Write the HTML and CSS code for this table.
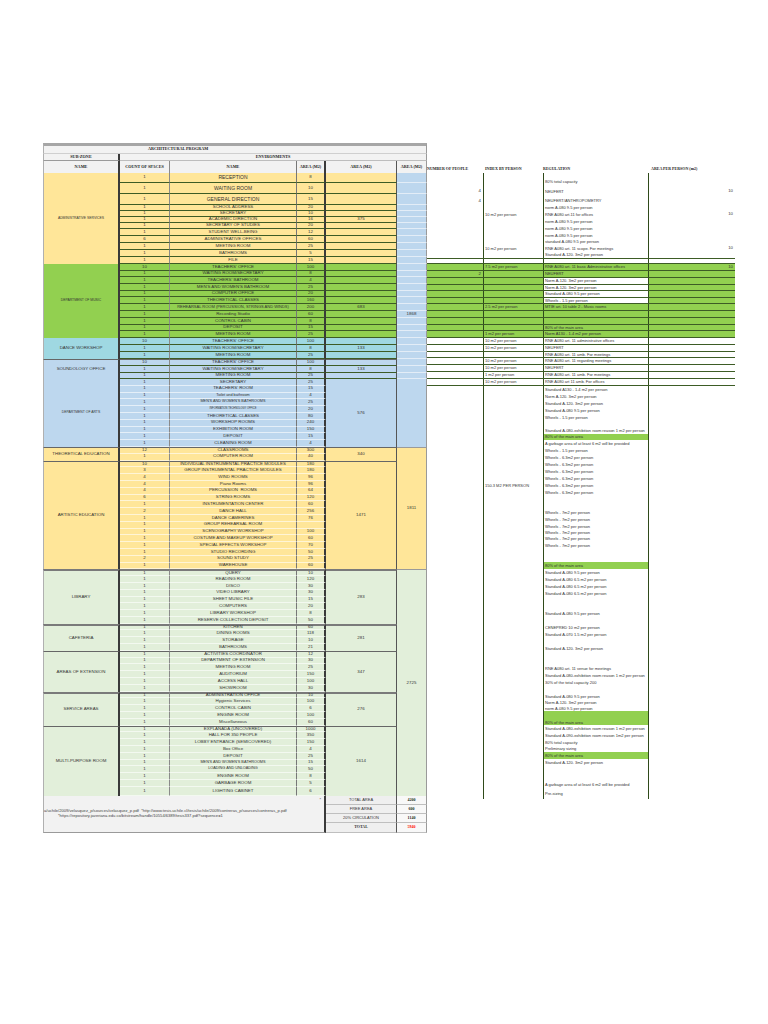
FILE: index.html
```html
<!DOCTYPE html>
<html lang="en">
<head>
<meta charset="utf-8">
<title>Architectural Program</title>
<link rel="stylesheet" href="styles.css">
</head>
<body>
<div class="page">
  <div class="sheet">
    <div class="hdr">
      <div class="h-title">ARCHITECTURAL PROGRAM</div>
      <div class="h-sub">SUB-ZONE</div>
      <div class="h-env">ENVIRONMENTS</div>
      <div class="h-col zone">NAME</div>
      <div class="h-col cnt">COUNT OF SPACES</div>
      <div class="h-col nm">NAME</div>
      <div class="h-col ar">AREA (M2)</div>
      <div class="h-col tot">AREA (M2)</div>
      <div class="h-col grand">AREA (M2)</div>
    </div>

    <div class="grid">
      <div class="sec lined adm">
        <div class="zone sp12 f34">ADMINISTRATIVE SERVICES</div>
        <div class="cnt">1</div><div class="nm f5">RECEPTION</div><div class="ar">8</div><div class="tot"></div><div class="grand"></div>
        <div class="cnt">1</div><div class="nm f5">WAITING ROOM</div><div class="ar">10</div><div class="tot"></div><div class="grand"></div>
        <div class="cnt">1</div><div class="nm f5">GENERAL DIRECTION</div><div class="ar">15</div><div class="tot"></div><div class="grand"></div>
        <div class="cnt">1</div><div class="nm">SCHOOL ADDRESS</div><div class="ar">20</div><div class="tot"></div><div class="grand"></div>
        <div class="cnt">1</div><div class="nm">SECRETARY</div><div class="ar">10</div><div class="tot"></div><div class="grand"></div>
        <div class="cnt">1</div><div class="nm">ACADEMIC DIRECTION</div><div class="ar">16</div><div class="tot">375</div><div class="grand"></div>
        <div class="cnt">1</div><div class="nm">SECRETARY OF STUDIES</div><div class="ar">20</div><div class="tot"></div><div class="grand"></div>
        <div class="cnt">1</div><div class="nm">STUDENT WELL-BEING</div><div class="ar">12</div><div class="tot"></div><div class="grand"></div>
        <div class="cnt">6</div><div class="nm">ADMINISTRATIVE OFFICES</div><div class="ar">60</div><div class="tot"></div><div class="grand"></div>
        <div class="cnt">1</div><div class="nm">MEETING ROOM</div><div class="ar">25</div><div class="tot"></div><div class="grand"></div>
        <div class="cnt">1</div><div class="nm">BATHROOMS</div><div class="ar">5</div><div class="tot"></div><div class="grand"></div>
        <div class="cnt">1</div><div class="nm">FILE</div><div class="ar">15</div><div class="tot"></div><div class="grand"></div>
      </div>

      <div class="sec lined mus">
        <div class="zone sp11 f34">DEPARTMENT OF MUSIC</div>
        <div class="cnt">10</div><div class="nm">TEACHERS' OFFICE</div><div class="ar">100</div><div class="tot"></div><div class="grand"></div>
        <div class="cnt">1</div><div class="nm">WAITING ROOM/SECRETARY</div><div class="ar">8</div><div class="tot"></div><div class="grand"></div>
        <div class="cnt">1</div><div class="nm">TEACHERS' BATHROOM</div><div class="ar">4</div><div class="tot"></div><div class="grand"></div>
        <div class="cnt">1</div><div class="nm">MEN'S AND WOMEN'S BATHROOM</div><div class="ar">25</div><div class="tot"></div><div class="grand"></div>
        <div class="cnt">1</div><div class="nm">COMPUTER OFFICE</div><div class="ar">20</div><div class="tot"></div><div class="grand"></div>
        <div class="cnt">1</div><div class="nm">THEORETICAL CLASSES</div><div class="ar">160</div><div class="tot"></div><div class="grand"></div>
        <div class="cnt">1</div><div class="nm f4">REHEARSAL ROOM (PERCUSSION, STRINGS AND WINDS)</div><div class="ar">200</div><div class="tot">683</div><div class="grand"></div>
        <div class="cnt">1</div><div class="nm">Recording Studio</div><div class="ar">60</div><div class="tot"></div><div class="grand">1868</div>
        <div class="cnt">1</div><div class="nm">CONTROL CABIN</div><div class="ar">8</div><div class="tot"></div><div class="grand"></div>
        <div class="cnt">1</div><div class="nm">DEPOSIT</div><div class="ar">15</div><div class="tot"></div><div class="grand"></div>
        <div class="cnt">1</div><div class="nm">MEETING ROOM</div><div class="ar">25</div><div class="tot"></div><div class="grand"></div>
      </div>

      <div class="sec lined dan">
        <div class="zone sp3">DANCE WORKSHOP</div>
        <div class="cnt">10</div><div class="nm">TEACHERS' OFFICE</div><div class="ar">100</div><div class="tot"></div><div class="grand"></div>
        <div class="cnt">1</div><div class="nm">WAITING ROOM/SECRETARY</div><div class="ar">8</div><div class="tot">133</div><div class="grand"></div>
        <div class="cnt">1</div><div class="nm">MEETING ROOM</div><div class="ar">25</div><div class="tot"></div><div class="grand"></div>
      </div>

      <div class="sec lined snd sep">
        <div class="zone sp3">SOUNDOLOGY OFFICE</div>
        <div class="cnt">10</div><div class="nm">TEACHERS' OFFICE</div><div class="ar">100</div><div class="tot"></div><div class="grand"></div>
        <div class="cnt">1</div><div class="nm">WAITING ROOM/SECRETARY</div><div class="ar">8</div><div class="tot">133</div><div class="grand"></div>
        <div class="cnt">1</div><div class="nm">MEETING ROOM</div><div class="ar">25</div><div class="tot"></div><div class="grand"></div>
      </div>

      <div class="sec lite art">
        <div class="zone sp10 f34">DEPARTMENT OF ARTS</div>
        <div class="cnt">1</div><div class="nm">SECRETARY</div><div class="ar">25</div><div class="tot sp10">576</div><div class="grand sp10"></div>
        <div class="cnt">1</div><div class="nm">TEACHERS' ROOM</div><div class="ar">15</div>
        <div class="cnt">1</div><div class="nm f38">Toilet and bathroom</div><div class="ar">4</div>
        <div class="cnt">1</div><div class="nm f38">MEN'S AND WOMEN'S BATHROOMS</div><div class="ar">25</div>
        <div class="cnt">1</div><div class="nm f26">INFORMATION TECHNOLOGY OFFICE</div><div class="ar">20</div>
        <div class="cnt">1</div><div class="nm">THEORETICAL CLASSES</div><div class="ar">80</div>
        <div class="cnt">1</div><div class="nm">WORKSHOP ROOMS</div><div class="ar">240</div>
        <div class="cnt">1</div><div class="nm">EXHIBITION ROOM</div><div class="ar">150</div>
        <div class="cnt">1</div><div class="nm">DEPOSIT</div><div class="ar">15</div>
        <div class="cnt">1</div><div class="nm">CLEANING ROOM</div><div class="ar">4</div>
      </div>

      <div class="sec lite yel sep">
        <div class="zone sp2">THEORETICAL EDUCATION</div>
        <div class="cnt">12</div><div class="nm">CLASSROOMS</div><div class="ar">300</div><div class="tot sp2">340</div><div class="grand sp18 gtop">1811</div>
        <div class="cnt">1</div><div class="nm">COMPUTER ROOM</div><div class="ar">40</div>
      </div>

      <div class="sec lite yel sep">
        <div class="zone sp16">ARTISTIC EDUCATION</div>
        <div class="cnt">10</div><div class="nm">INDIVIDUAL INSTRUMENTAL PRACTICE MODULES</div><div class="ar">180</div><div class="tot sp16">1471</div>
        <div class="cnt">3</div><div class="nm">GROUP INSTRUMENTAL PRACTICE MODULES</div><div class="ar">180</div>
        <div class="cnt">4</div><div class="nm">WIND ROOMS</div><div class="ar">96</div>
        <div class="cnt">4</div><div class="nm">Piano Rooms</div><div class="ar">96</div>
        <div class="cnt">4</div><div class="nm">PERCUSSION &nbsp;ROOMS</div><div class="ar">64</div>
        <div class="cnt">6</div><div class="nm">STRING ROOMS</div><div class="ar">120</div>
        <div class="cnt">1</div><div class="nm">INSTRUMENTATION CENTER</div><div class="ar">60</div>
        <div class="cnt">2</div><div class="nm">DANCE HALL</div><div class="ar">256</div>
        <div class="cnt">1</div><div class="nm">DANCE CAMERINES</div><div class="ar">76</div>
        <div class="cnt">1</div><div class="nm">GROUP REHEARSAL ROOM</div><div class="ar"></div>
        <div class="cnt">1</div><div class="nm">SCENOGRAPHY WORKSHOP</div><div class="ar">100</div>
        <div class="cnt">1</div><div class="nm">COSTUME AND MAKEUP WORKSHOP</div><div class="ar">60</div>
        <div class="cnt">1</div><div class="nm">SPECIAL EFFECTS WORKSHOP</div><div class="ar">70</div>
        <div class="cnt">1</div><div class="nm">STUDIO RECORDING</div><div class="ar">50</div>
        <div class="cnt">2</div><div class="nm">SOUND STUDY</div><div class="ar">25</div>
        <div class="cnt">1</div><div class="nm">WAREHOUSE</div><div class="ar">60</div>
      </div>

      <div class="sec lite lgr sep2">
        <div class="zone sp8">LIBRARY</div>
        <div class="cnt">1</div><div class="nm">QUERY</div><div class="ar">10</div><div class="tot sp8">283</div><div class="grand sp33 gtop">2725</div>
        <div class="cnt">1</div><div class="nm">READING ROOM</div><div class="ar">120</div>
        <div class="cnt">1</div><div class="nm">DISCO</div><div class="ar">30</div>
        <div class="cnt">1</div><div class="nm">VIDEO LIBRARY</div><div class="ar">30</div>
        <div class="cnt">1</div><div class="nm">SHEET MUSIC FILE</div><div class="ar">15</div>
        <div class="cnt">1</div><div class="nm">COMPUTERS</div><div class="ar">20</div>
        <div class="cnt">1</div><div class="nm">LIBRARY WORKSHOP</div><div class="ar">8</div>
        <div class="cnt">1</div><div class="nm">RESERVE COLLECTION DEPOSIT</div><div class="ar">50</div>
      </div>

      <div class="sec lite lgr sep2">
        <div class="zone sp4">CAFETERIA</div>
        <div class="cnt">1</div><div class="nm">KITCHEN</div><div class="ar">60</div><div class="tot sp4">281</div>
        <div class="cnt">1</div><div class="nm">DINING ROOMS</div><div class="ar">118</div>
        <div class="cnt">1</div><div class="nm">STORAGE</div><div class="ar">10</div>
        <div class="cnt">1</div><div class="nm">BATHROOMS</div><div class="ar">21</div>
      </div>

      <div class="sec lite lgr sep">
        <div class="zone sp6">AREAS OF EXTENSION</div>
        <div class="cnt">1</div><div class="nm">ACTIVITIES COORDINATOR</div><div class="ar">12</div><div class="tot sp6">347</div>
        <div class="cnt">1</div><div class="nm">DEPARTMENT OF EXTENSION</div><div class="ar">30</div>
        <div class="cnt">1</div><div class="nm">MEETING ROOM</div><div class="ar">25</div>
        <div class="cnt">1</div><div class="nm">AUDITORIUM</div><div class="ar">150</div>
        <div class="cnt">1</div><div class="nm">ACCESS HALL</div><div class="ar">100</div>
        <div class="cnt">1</div><div class="nm">SHOWROOM</div><div class="ar">30</div>
      </div>

      <div class="sec lite lgr sep2">
        <div class="zone sp5">SERVICE AREAS</div>
        <div class="cnt">1</div><div class="nm">ADMINISTRATION OFFICE</div><div class="ar">10</div><div class="tot sp5">276</div>
        <div class="cnt">1</div><div class="nm">Hygienic Services</div><div class="ar">100</div>
        <div class="cnt">1</div><div class="nm">CONTROL CABIN</div><div class="ar">6</div>
        <div class="cnt">1</div><div class="nm">ENGINE ROOM</div><div class="ar">100</div>
        <div class="cnt">1</div><div class="nm">Miscellaneous</div><div class="ar">60</div>
      </div>

      <div class="sec lite lgr sep">
        <div class="zone sp10">MULTI-PURPOSE ROOM</div>
        <div class="cnt">1</div><div class="nm">EXPLANADA (UNCOVERED)</div><div class="ar">1000</div><div class="tot sp10">1614</div>
        <div class="cnt">1</div><div class="nm">HALL FOR 350 PEOPLE</div><div class="ar">350</div>
        <div class="cnt">1</div><div class="nm">LOBBY ENTRANCE (SEMICOVERED)</div><div class="ar">150</div>
        <div class="cnt">1</div><div class="nm">Box Office</div><div class="ar">4</div>
        <div class="cnt">1</div><div class="nm">DEPOSIT</div><div class="ar">25</div>
        <div class="cnt">1</div><div class="nm f38">MEN'S AND WOMEN'S BATHROOMS</div><div class="ar">15</div>
        <div class="cnt">1</div><div class="nm f38">LOADING AND UNLOADING</div><div class="ar">50</div>
        <div class="cnt">1</div><div class="nm">ENGINE ROOM</div><div class="ar">8</div>
        <div class="cnt">1</div><div class="nm">GARBAGE ROOM</div><div class="ar">5</div>
        <div class="cnt">1</div><div class="nm">LIGHTING CABINET</div><div class="ar">6</div>
      </div>

      <div class="sec foot">
        <div class="note">
          <span class="star">*</span>
          <div class="nl nl1">a/uchile/2009/velasquez_p/sources/velasquez_p.pdf &nbsp;*http://www.tesis.uchile.cl/tesis/uchile/2009/contreras_p/sources/contreras_p.pdf</div>
          <div class="nl nl2">*https://repository.javeriana.edu.co/bitstream/handle/10554/6389/tesis337.pdf?sequence=1</div>
        </div>
        <div class="tot lab">TOTAL AREA</div><div class="grand val">4200</div>
        <div class="tot lab">FREE AREA</div><div class="grand val">600</div>
        <div class="tot lab">20% CIRCULATION</div><div class="grand val">1140</div>
        <div class="tot lab srf">TOTAL</div><div class="grand val red">5940</div>
      </div>
    </div>
  </div>

  <div class="side">
    <div class="side-hdr">
      <div>NUMBER OF PEOPLE</div>
      <div class="pl">INDEX BY PERSON</div>
      <div>REGULATION</div>
      <div class="pl">AREA PER PERSON (m2)</div>
    </div>
    <div class="rows">
      <div class="rw h5"><div class="np"></div><div class="ix"></div><div class="rg"></div><div class="ap"></div></div>
      <div class="rw h8"><div class="np"></div><div class="ix"></div><div class="rg">80% total capacity</div><div class="ap"></div></div>
      <div class="rw h11"><div class="np">4</div><div class="ix"></div><div class="rg">NEUFERT</div><div class="ap">10</div></div>
      <div class="rw h8"><div class="np">4</div><div class="ix"></div><div class="rg">NEUFERT/ANTHROPOMETRY</div><div class="ap"></div></div>
      <div class="rw h6"><div class="np"></div><div class="ix"></div><div class="rg">norm A-080 9.5 per person</div><div class="ap"></div></div>
      <div class="rw h7"><div class="np"></div><div class="ix">10 m2 per person</div><div class="rg">RNE A080 art.11 for offices</div><div class="ap">10</div></div>
      <div class="rw h7"><div class="np"></div><div class="ix"></div><div class="rg">norm A-080 9.5 per person</div><div class="ap"></div></div>
      <div class="rw h7"><div class="np"></div><div class="ix"></div><div class="rg">norm A-080 9.5 per person</div><div class="ap"></div></div>
      <div class="rw h7"><div class="np"></div><div class="ix"></div><div class="rg">norm A-080 9.5 per person</div><div class="ap"></div></div>
      <div class="rw h6"><div class="np"></div><div class="ix"></div><div class="rg">standard A-080 9.5 per person</div><div class="ap"></div></div>
      <div class="rw h7"><div class="np"></div><div class="ix">10 m2 per person</div><div class="rg">RNE A080 art. 11 scope. For meetings</div><div class="ap">10</div></div>
      <div class="rw h7 bl"><div class="np"></div><div class="ix"></div><div class="rg">Standard A-120. 3m2 per person</div><div class="ap"></div></div>
      <div class="rw h5 bl"><div class="np"></div><div class="ix"></div><div class="rg"></div><div class="ap"></div></div>

      <div class="rw h7 gn bl"><div class="np"></div><div class="ix">7.5 m2 per person</div><div class="rg">RNE A080 art. 11 basic Administrative offices</div><div class="ap">10</div></div>
      <div class="rw h7 gn bl"><div class="np">2</div><div class="ix"></div><div class="rg">NEUFERT</div><div class="ap"></div></div>
      <div class="rw h7 gn bl"><div class="np"></div><div class="ix"></div><div class="rg wh">Norm A-120. 3m2 per person</div><div class="ap"></div></div>
      <div class="rw h6 gn bl"><div class="np"></div><div class="ix"></div><div class="rg wh">Norm A-120. 3m2 per person</div><div class="ap"></div></div>
      <div class="rw h7 gn bl"><div class="np"></div><div class="ix"></div><div class="rg wh">Standard A-080 9.5 per person</div><div class="ap"></div></div>
      <div class="rw h6 gn bl"><div class="np"></div><div class="ix"></div><div class="rg wh">Wheels - 1.5 per person</div><div class="ap"></div></div>
      <div class="rw h7 gn bl"><div class="np"></div><div class="ix">2.5 m2 per person</div><div class="rg">MTIE art. 10 table 2 - Music rooms</div><div class="ap"></div></div>
      <div class="rw h7 gn bl"><div class="np"></div><div class="ix"></div><div class="rg"></div><div class="ap"></div></div>
      <div class="rw h7 gn bl"><div class="np"></div><div class="ix"></div><div class="rg"></div><div class="ap"></div></div>
      <div class="rw h6 gn bl"><div class="np"></div><div class="ix"></div><div class="rg">80% of the main area</div><div class="ap"></div></div>
      <div class="rw h7 gn bl"><div class="np"></div><div class="ix">1 m2 per person</div><div class="rg">Norm A130 - 1.4 m2 per person</div><div class="ap"></div></div>

      <div class="rw h7 bl"><div class="np"></div><div class="ix">10 m2 per person</div><div class="rg">RNE A080 art. 11 administrative offices</div><div class="ap"></div></div>
      <div class="rw h7 bl"><div class="np"></div><div class="ix">10 m2 per person</div><div class="rg">NEUFERT</div><div class="ap"></div></div>
      <div class="rw h6 bl"><div class="np"></div><div class="ix"></div><div class="rg">RNE A080 art. 11 amb. For meetings</div><div class="ap"></div></div>
      <div class="rw h7 bl"><div class="np"></div><div class="ix">10 m2 per person</div><div class="rg">RNE A080 art. 11 regarding meetings</div><div class="ap"></div></div>
      <div class="rw h7 bl"><div class="np"></div><div class="ix">10 m2 per person</div><div class="rg">NEUFERT</div><div class="ap"></div></div>
      <div class="rw h7 bl"><div class="np"></div><div class="ix">1 m2 per person</div><div class="rg">RNE A080 art. 11 amb. For meetings</div><div class="ap"></div></div>
      <div class="rw h7 bl"><div class="np"></div><div class="ix">10 m2 per person</div><div class="rg">RNE A080 art 11 amb. For offices</div><div class="ap"></div></div>

      <div class="rw h7"><div class="np"></div><div class="ix"></div><div class="rg">Standard A130 - 1.4 m2 per person</div><div class="ap"></div></div>
      <div class="rw h7"><div class="np"></div><div class="ix"></div><div class="rg">Norm A-120. 3m2 per person</div><div class="ap"></div></div>
      <div class="rw h7"><div class="np"></div><div class="ix"></div><div class="rg">Standard A-120. 3m2 per person</div><div class="ap"></div></div>
      <div class="rw h7"><div class="np"></div><div class="ix"></div><div class="rg">Standard A-080 9.5 per person</div><div class="ap"></div></div>
      <div class="rw h7"><div class="np"></div><div class="ix"></div><div class="rg">Wheels - 1.5 per person</div><div class="ap"></div></div>
      <div class="rw h7"><div class="np"></div><div class="ix"></div><div class="rg"></div><div class="ap"></div></div>
      <div class="rw h6"><div class="np"></div><div class="ix"></div><div class="rg">Standard A-080-exhibition room reason 1 m2 per person</div><div class="ap"></div></div>
      <div class="rw h6"><div class="np"></div><div class="ix"></div><div class="rg hl">80% of the main area</div><div class="ap"></div></div>
      <div class="rw h7"><div class="np"></div><div class="ix"></div><div class="rg">A garbage area of at least 6 m2 will be provided</div><div class="ap"></div></div>
      <div class="rw h7"><div class="np"></div><div class="ix"></div><div class="rg">Wheels - 1.5 per person</div><div class="ap"></div></div>
      <div class="rw h7"><div class="np"></div><div class="ix"></div><div class="rg">Wheels - 6.3m2 per person</div><div class="ap"></div></div>
      <div class="rw h7"><div class="np"></div><div class="ix"></div><div class="rg">Wheels - 6.3m2 per person</div><div class="ap"></div></div>
      <div class="rw h7"><div class="np"></div><div class="ix"></div><div class="rg">Wheels - 6.3m2 per person</div><div class="ap"></div></div>
      <div class="rw h7"><div class="np"></div><div class="ix"></div><div class="rg">Wheels - 6.3m2 per person</div><div class="ap"></div></div>
      <div class="rw h7"><div class="np"></div><div class="ix">150.3 M2 PER PERSON</div><div class="rg">Wheels - 6.3m2 per person</div><div class="ap"></div></div>
      <div class="rw h7"><div class="np"></div><div class="ix"></div><div class="rg">Wheels - 6.3m2 per person</div><div class="ap"></div></div>
      <div class="rw h13"><div class="np"></div><div class="ix"></div><div class="rg"></div><div class="ap"></div></div>
      <div class="rw h7"><div class="np"></div><div class="ix"></div><div class="rg">Wheels - 7m2 per person</div><div class="ap"></div></div>
      <div class="rw h7"><div class="np"></div><div class="ix"></div><div class="rg">Wheels - 7m2 per person</div><div class="ap"></div></div>
      <div class="rw h7"><div class="np"></div><div class="ix"></div><div class="rg">Wheels - 7m2 per person</div><div class="ap"></div></div>
      <div class="rw h6"><div class="np"></div><div class="ix"></div><div class="rg">Wheels - 7m2 per person</div><div class="ap"></div></div>
      <div class="rw h6"><div class="np"></div><div class="ix"></div><div class="rg">Wheels - 7m2 per person</div><div class="ap"></div></div>
      <div class="rw h7"><div class="np"></div><div class="ix"></div><div class="rg">Wheels - 7m2 per person</div><div class="ap"></div></div>
      <div class="rw h13"><div class="np"></div><div class="ix"></div><div class="rg"></div><div class="ap"></div></div>
      <div class="rw h7"><div class="np"></div><div class="ix"></div><div class="rg hl">80% of the main area</div><div class="ap"></div></div>
      <div class="rw h7"><div class="np"></div><div class="ix"></div><div class="rg">Standard A-080 9.5 per person</div><div class="ap"></div></div>
      <div class="rw h7"><div class="np"></div><div class="ix"></div><div class="rg">Standard A-080 6.5 m2 per person</div><div class="ap"></div></div>
      <div class="rw h7"><div class="np"></div><div class="ix"></div><div class="rg">Standard A-080 6.5 m2 per person</div><div class="ap"></div></div>
      <div class="rw h7"><div class="np"></div><div class="ix"></div><div class="rg">Standard A-080 6.5 m2 per person</div><div class="ap"></div></div>
      <div class="rw h13"><div class="np"></div><div class="ix"></div><div class="rg"></div><div class="ap"></div></div>
      <div class="rw h7"><div class="np"></div><div class="ix"></div><div class="rg">Standard A-080 9.5 per person</div><div class="ap"></div></div>
      <div class="rw h7"><div class="np"></div><div class="ix"></div><div class="rg"></div><div class="ap"></div></div>
      <div class="rw h7"><div class="np"></div><div class="ix"></div><div class="rg">CENEPRED 10 m2 per person</div><div class="ap"></div></div>
      <div class="rw h7"><div class="np"></div><div class="ix"></div><div class="rg">Standard A-070 1.5 m2 per person</div><div class="ap"></div></div>
      <div class="rw h7"><div class="np"></div><div class="ix"></div><div class="rg"></div><div class="ap"></div></div>
      <div class="rw h7"><div class="np"></div><div class="ix"></div><div class="rg">Standard A-120. 3m2 per person</div><div class="ap"></div></div>
      <div class="rw h13"><div class="np"></div><div class="ix"></div><div class="rg"></div><div class="ap"></div></div>
      <div class="rw h7"><div class="np"></div><div class="ix"></div><div class="rg">RNE A080 art. 11 venue for meetings</div><div class="ap"></div></div>
      <div class="rw h7"><div class="np"></div><div class="ix"></div><div class="rg">Standard A-080-exhibition room reason 1 m2 per person</div><div class="ap"></div></div>
      <div class="rw h7"><div class="np"></div><div class="ix"></div><div class="rg">30% of the total capacity 200</div><div class="ap"></div></div>
      <div class="rw h7"><div class="np"></div><div class="ix"></div><div class="rg"></div><div class="ap"></div></div>
      <div class="rw h7"><div class="np"></div><div class="ix"></div><div class="rg">Standard A-080 9.5 per person</div><div class="ap"></div></div>
      <div class="rw h6"><div class="np"></div><div class="ix"></div><div class="rg">Norm A-120. 3m2 per person</div><div class="ap"></div></div>
      <div class="rw h5"><div class="np"></div><div class="ix"></div><div class="rg">norm A-080 9.5 per person</div><div class="ap"></div></div>
      <div class="rw h14"><div class="np"></div><div class="ix"></div><div class="rg hl bot">80% of the main area</div><div class="ap"></div></div>
      <div class="rw h7"><div class="np"></div><div class="ix"></div><div class="rg">Standard A-080-exhibition room reason 1 m2 per person</div><div class="ap"></div></div>
      <div class="rw h7"><div class="np"></div><div class="ix"></div><div class="rg">Standard A-090-exhibition room reason 1m2 per person</div><div class="ap"></div></div>
      <div class="rw h7"><div class="np"></div><div class="ix"></div><div class="rg">80% total capacity</div><div class="ap"></div></div>
      <div class="rw h6"><div class="np"></div><div class="ix"></div><div class="rg">Preliminary sizing</div><div class="ap"></div></div>
      <div class="rw h7"><div class="np"></div><div class="ix"></div><div class="rg hl">80% of the main area</div><div class="ap"></div></div>
      <div class="rw h8"><div class="np"></div><div class="ix"></div><div class="rg">Standard A-120. 3m2 per person</div><div class="ap"></div></div>
      <div class="rw h14"><div class="np"></div><div class="ix"></div><div class="rg"></div><div class="ap"></div></div>
      <div class="rw h8"><div class="np"></div><div class="ix"></div><div class="rg">A garbage area of at least 6 m2 will be provided</div><div class="ap"></div></div>
      <div class="rw h10"><div class="np"></div><div class="ix"></div><div class="rg">Pre-sizing</div><div class="ap"></div></div>
    </div>
  </div>
</div>
</body>
</html>
```

FILE: styles.css
```css
* { box-sizing: border-box; margin: 0; padding: 0; }

body {
  background: #ffffff;
  color: #333333;
  font-family: "Liberation Sans", Arial, sans-serif;
}

.page {
  display: flex;
  align-items: flex-start;
  padding: 143px 0 0 43px;
}

.sheet { width: 384px; }

/* ---------- header of the left table ---------- */
.hdr {
  display: grid;
  grid-template-columns: 77px 50px 127px 29px 71px 30px;
  grid-template-rows: 11px 7px 12px;
  font-family: "Liberation Serif", "Times New Roman", serif;
  font-weight: bold;
  font-size: 4.2px;
  line-height: 1;
  color: #222222;
}
.hdr > div {
  background: #f2f2f2;
  display: flex;
  align-items: center;
  justify-content: center;
  white-space: nowrap;
}
.h-title {
  grid-column: 1 / -1;
  justify-content: flex-start !important;
  padding-left: 104px;
  border-top: 3px solid #a6a6a6;
  border-left: 1px solid #b0b0b0;
  border-right: 1px solid #9a9a9a;
  border-bottom: 1px solid #cfcfcf;
}
.h-sub {
  grid-column: 1;
  border-left: 1px solid #b0b0b0;
  border-right: 2px solid #3a3a3a;
  border-bottom: 1px solid #9a9a9a;
}
.h-env {
  grid-column: 2 / -1;
  border-right: 1px solid #9a9a9a;
  border-bottom: 1px solid #bdbdbd;
}

/* ---------- columns ---------- */
.zone  { grid-column: 1; border-left: 1px solid #b0b0b0; border-right: 2px solid #3a3a3a; }
.cnt   { grid-column: 2; border-right: 1px solid #8a8a8a; }
.nm    { grid-column: 3; border-right: 1px solid #777777; }
.ar    { grid-column: 4; border-right: 2px solid #3a3a3a; }
.tot   { grid-column: 5; border-right: 1px solid #555555; }
.grand { grid-column: 6; border-right: 1px solid #9a9a9a; }

/* ---------- data grid ---------- */
.grid {
  display: grid;
  grid-template-columns: 77px 50px 127px 29px 71px 30px;
  grid-template-rows:
    10px 11px 11px 6px 6px 6px 6px 7px 7px 7px 7px 7px
    7px 6px 7px 7px 6px 7px 7px 7px 7px 6px 7px
    7px 7px 7px
    7px 7px 6px
    repeat(60, 6.8px) 9px
    9px 9px 9px 10px;
  font-size: 4.4px;
  line-height: 1;
  color: #333333;
}
.sec { display: contents; }
.sec > div {
  display: flex;
  align-items: center;
  justify-content: center;
  white-space: nowrap;
}

.sp2 { grid-row: span 2; }
.sp3 { grid-row: span 3; }
.sp4 { grid-row: span 4; }
.sp5 { grid-row: span 5; }
.sp6 { grid-row: span 6; }
.sp8 { grid-row: span 8; }
.sp10 { grid-row: span 10; }
.sp11 { grid-row: span 11; }
.sp12 { grid-row: span 12; }
.sp16 { grid-row: span 16; }
.sp18 { grid-row: span 18; }
.sp33 { grid-row: span 33; }

.f5  { font-size: 5px; }
.f4  { font-size: 4px; }
.f38 { font-size: 3.8px; }
.f34 { font-size: 3.4px; }
.f26 { font-size: 2.6px; }

/* section colours */
.adm > div { background: #ffe699; }
.mus > div { background: #92d050; }
.dan > div { background: #9fd8e2; }
.snd > div, .art > div { background: #bdd7ee; }
.yel > div { background: #ffe699; }
.lgr > div { background: #e2efda; }
.lined > .grand { background: #bdd7ee; }

/* row lines */
.lined > .cnt, .lined > .nm, .lined > .ar, .lined > .tot { border-bottom: 1px solid #3d5c25; }
.lined > .grand { border-bottom: 1px solid #e3edf7; }
.lite > .cnt, .lite > .nm, .lite > .ar { border-bottom: 1px solid rgba(255, 255, 255, 0.6); }
.sep > :nth-child(-n+5) { border-top: 1px solid #666666; }
.sep2 > :nth-child(-n+5) { border-top: 2px solid #7a7a7a; }
.gtop { border-top: 1px solid #9a9a9a; }

/* footer */
.foot > div {
  background: #f2f2f2;
  border-bottom: 1px solid #bfbfbf;
}
.foot > .note {
  grid-column: 1 / 5;
  grid-row: span 4;
  flex-direction: column;
  align-items: flex-start;
  justify-content: flex-start;
  border-left: 1px solid #b0b0b0;
  border-right: 2px solid #3a3a3a;
  border-bottom: 1px solid #9a9a9a;
  color: #444444;
}
.star {
  align-self: flex-end;
  margin: 1.5px 3px 0 0;
  font-size: 4px;
  line-height: 5px;
}
.nl {
  font-size: 4.1px;
  line-height: 5px;
  white-space: nowrap;
}
.nl1 { margin-top: 6px; padding-left: 0; }
.nl2 { padding-left: 14px; }
.lab { font-size: 4px; color: #333333; }
.foot > .lab { background: #efefef; }
.foot > .val { background: #f8f8f8; }
.val {
  font-family: "Liberation Serif", "Times New Roman", serif;
  font-weight: bold;
  font-size: 4px;
  color: #222222;
}
.srf { font-family: "Liberation Serif", "Times New Roman", serif; font-weight: bold; }
.red { color: #ff0000; }

/* ---------- right-hand block ---------- */
.side { width: 308px; }
.side-hdr {
  height: 30px;
  display: grid;
  grid-template-columns: 56px 60px 106px 86px;
  align-items: end;
  padding-bottom: 2px;
  font-family: "Liberation Serif", "Times New Roman", serif;
  font-weight: bold;
  font-size: 4px;
  line-height: 1;
  color: #222222;
  white-space: nowrap;
}
.side-hdr .pl { padding-left: 2px; }

.rw {
  display: grid;
  grid-template-columns: 56px 60px 106px 86px;
  font-size: 4px;
  line-height: 1;
  color: #333333;
}
.rw > div {
  display: flex;
  align-items: center;
  white-space: nowrap;
}
.np { justify-content: flex-end; padding-right: 2px; font-size: 4.3px; }
.ix { border-left: 1px solid #2f4a1a; padding-left: 1px; }
.rg { border-left: 1px solid #2f4a1a; border-right: 1px solid #2f4a1a; padding-left: 1px; }
.ap { justify-content: flex-end; padding-right: 2px; font-size: 4.3px; }

.h5 { height: 5px; }
.h6 { height: 6px; }
.h7 { height: 7px; }
.h8 { height: 8px; }
.h10 { height: 10px; }
.h11 { height: 11px; }
.h13 { height: 13px; }
.h14 { height: 14px; }

.gn { background: #92d050; }
.wh { background: #ffffff; }
.hl { background: #92d050; }
.bot { align-items: flex-end !important; }
.bl { border-bottom: 1px solid #3d5c25; }
```
